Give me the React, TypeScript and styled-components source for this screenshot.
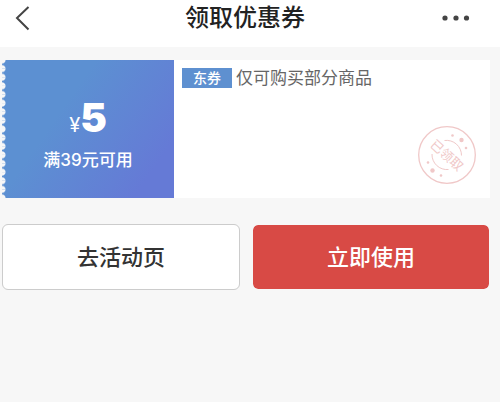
import React from "react";
import styled, { createGlobalStyle } from "styled-components";

const GlobalStyle = createGlobalStyle`
  * { box-sizing: border-box; }
  body {
    margin: 0;
    background: #f7f7f7;
    font-family: Inter, "Noto Sans CJK SC", sans-serif;
  }
`;

const Header = styled.header`
  display: grid;
  grid-template-columns: 1fr auto 1fr;
  align-items: center;
  height: 47px;
  padding: 0 30px 12px 14px;
  background: #fff;
`;

const Title = styled.h1`
  margin: 0;
  padding-left: 6px;
  font-size: 24px;
  line-height: 34px;
  font-weight: 500;
  color: #222;
`;

const IconButton = styled.button<{ $end?: boolean }>`
  display: flex;
  justify-self: ${(p) => (p.$end ? "end" : "start")};
  padding: 0;
  border: 0;
  background: none;
  color: #444;
`;

const Content = styled.main`
  padding: 13px 10px 13px 2px;
`;

const Coupon = styled.article`
  display: flex;
  min-height: 138px;
  background: #fff;
`;

const Value = styled.section`
  position: relative;
  flex: 0 0 172px;
  display: flex;
  flex-direction: column;
  align-items: center;
  padding-top: 34px;
  background: linear-gradient(125deg, #5c90d2 35%, #657ad6 85%);
  color: #fff;

  &::before {
    content: "";
    position: absolute;
    inset: 0 auto 0 0;
    width: 4px;
    background-image:
      radial-gradient(circle at 0 0, #f7f7f7 3px, transparent 4px),
      radial-gradient(circle at 0 100%, #f7f7f7 3px, transparent 4px);
    background-size: 4px 6.25%;
  }
`;

const Amount = styled.div`
  display: flex;
  align-items: baseline;
  font-size: 40px;
  line-height: 48px;
  font-weight: 900;
`;

const Currency = styled.span`
  font-size: 20px;
  font-weight: 400;
`;

const Condition = styled.div`
  font-size: 17px;
  line-height: 22px;
  font-weight: 500;
`;

const Details = styled.section`
  flex: 1;
  display: flex;
  flex-direction: column;
  justify-content: space-between;
  padding: 6px 13px 13px 8px;
`;

const Description = styled.div`
  display: flex;
  align-items: center;
  gap: 4px;
  font-size: 17px;
  line-height: 24px;
  color: #666;
`;

const Tag = styled.span`
  padding: 0 11px;
  background: #5e90d0;
  color: #fff;
  font-size: 14px;
  line-height: 20px;
  font-weight: 500;
`;

const Stamp = styled.svg`
  align-self: flex-end;
  font-family: "Noto Sans CJK SC", sans-serif;
`;

const Actions = styled.nav`
  display: grid;
  grid-template-columns: 1fr 1fr;
  gap: 12px;
  margin-top: 26px;
`;

const ActionButton = styled.button<{ $primary?: boolean }>`
  height: 66px;
  padding: 0 0 4px;
  border: ${(p) => (p.$primary ? "1px solid #f7f7f7" : "1px solid #ccc")};
  border-radius: 6px;
  background: ${(p) => (p.$primary ? "#d84a45" : "#fff")};
  background-clip: padding-box;
  color: ${(p) => (p.$primary ? "#fff" : "#333")};
  font-family: inherit;
  font-size: 22px;
  font-weight: 500;
`;

export default function App() {
  return (
    <>
      <GlobalStyle />
      <Header>
        <IconButton aria-label="返回">
          <svg width="16" height="26" viewBox="0 0 16 26" fill="none" stroke="currentColor" strokeWidth="2">
            <path d="M14.5 2 3 13l11.500 11.500" />
          </svg>
        </IconButton>
        <Title>领取优惠券</Title>
        <IconButton $end aria-label="更多">
          <svg width="30" height="8" viewBox="0 0 30 8" fill="currentColor">
            <circle cx="5" cy="4" r="2.600" />
            <circle cx="16" cy="4" r="2.600" />
            <circle cx="26.500" cy="4" r="2.600" />
          </svg>
        </IconButton>
      </Header>
      <Content>
        <Coupon>
          <Value>
            <Amount>
              <Currency>¥</Currency>5
            </Amount>
            <Condition>满39元可用</Condition>
          </Value>
          <Details>
            <Description>
              <Tag>东券</Tag>
              仅可购买部分商品
            </Description>
            <Stamp width="60" height="60" viewBox="-30 -30 60 60" role="img" aria-label="已领取">
              <g fill="none" stroke="#f0c8c8">
                <circle r="28.300" strokeWidth="1.300" />
                <path d="M-2.500 -14.500A15 15 0 0 1 14.500 0.500M-15 -1A15 15 0 0 0 1.500 14.500" />
              </g>
              <g fill="#f0c8c8">
                <circle cx="5.500" cy="-19.500" r="1.300" />
                <circle cx="14.500" cy="-15" r="2.200" />
                <circle cx="19" cy="-7" r="1.300" />
                <circle cx="-19" cy="7.500" r="1.300" />
                <circle cx="-14.500" cy="15.500" r="2.200" />
                <circle cx="-6" cy="20.500" r="1.300" />
                <text transform="rotate(42)" textAnchor="middle" y="5" fontSize="13">已领取</text>
              </g>
            </Stamp>
          </Details>
        </Coupon>
        <Actions>
          <ActionButton>去活动页</ActionButton>
          <ActionButton $primary>立即使用</ActionButton>
        </Actions>
      </Content>
    </>
  );
}
